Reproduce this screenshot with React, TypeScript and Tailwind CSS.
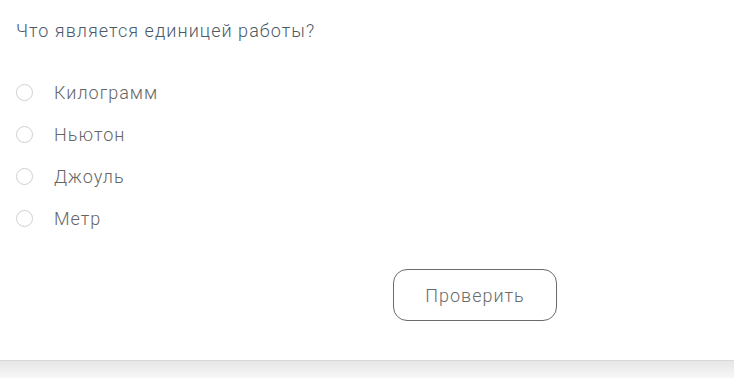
import React, { useState } from 'react';

const options = ['Килограмм', 'Ньютон', 'Джоуль', 'Метр'];

export default function App() {
  const [selected, setSelected] = useState<number | null>(null);

  return (
    <div className="h-[378px] w-[734px] overflow-hidden flex flex-col" style={{ fontFamily: 'Roboto, "Noto Sans", sans-serif' }}>
      <div className="h-[361px] shrink-0 bg-white border-b border-[#d9d9d9] pt-[20px] pl-[16px]">
        <div className="text-[18px] leading-[22px] text-[#4b5a68] font-light tracking-[1.05px]">Что является единицей работы?</div>

        <div className="mt-[39px] flex flex-col gap-[20px]">
          {options.map((opt, i) => (
            <label key={opt} className="flex items-center h-[22px] cursor-pointer" onClick={() => setSelected(i)}>
              <span className="w-[17px] h-[17px] rounded-full border border-[#cfcfcf] flex items-center justify-center">
                {selected === i && <span className="w-[9px] h-[9px] rounded-full bg-[#666]" />}
              </span>
              <span className="ml-[21px] text-[18px] text-[#666666] font-light tracking-[1px]">{opt}</span>
            </label>
          ))}
        </div>

        <div className="mt-[40px] pl-[377px]">
          <button className="w-[164px] h-[52px] rounded-[14px] border border-[#6b6b6b] text-[18px] text-[#6b6b6b] bg-white font-light tracking-[1px]">
            Проверить
          </button>
        </div>
      </div>
      <div className="flex-1 bg-gradient-to-b from-[#e6e6e6] to-[#f7f7f7]" />
    </div>
  );
}
